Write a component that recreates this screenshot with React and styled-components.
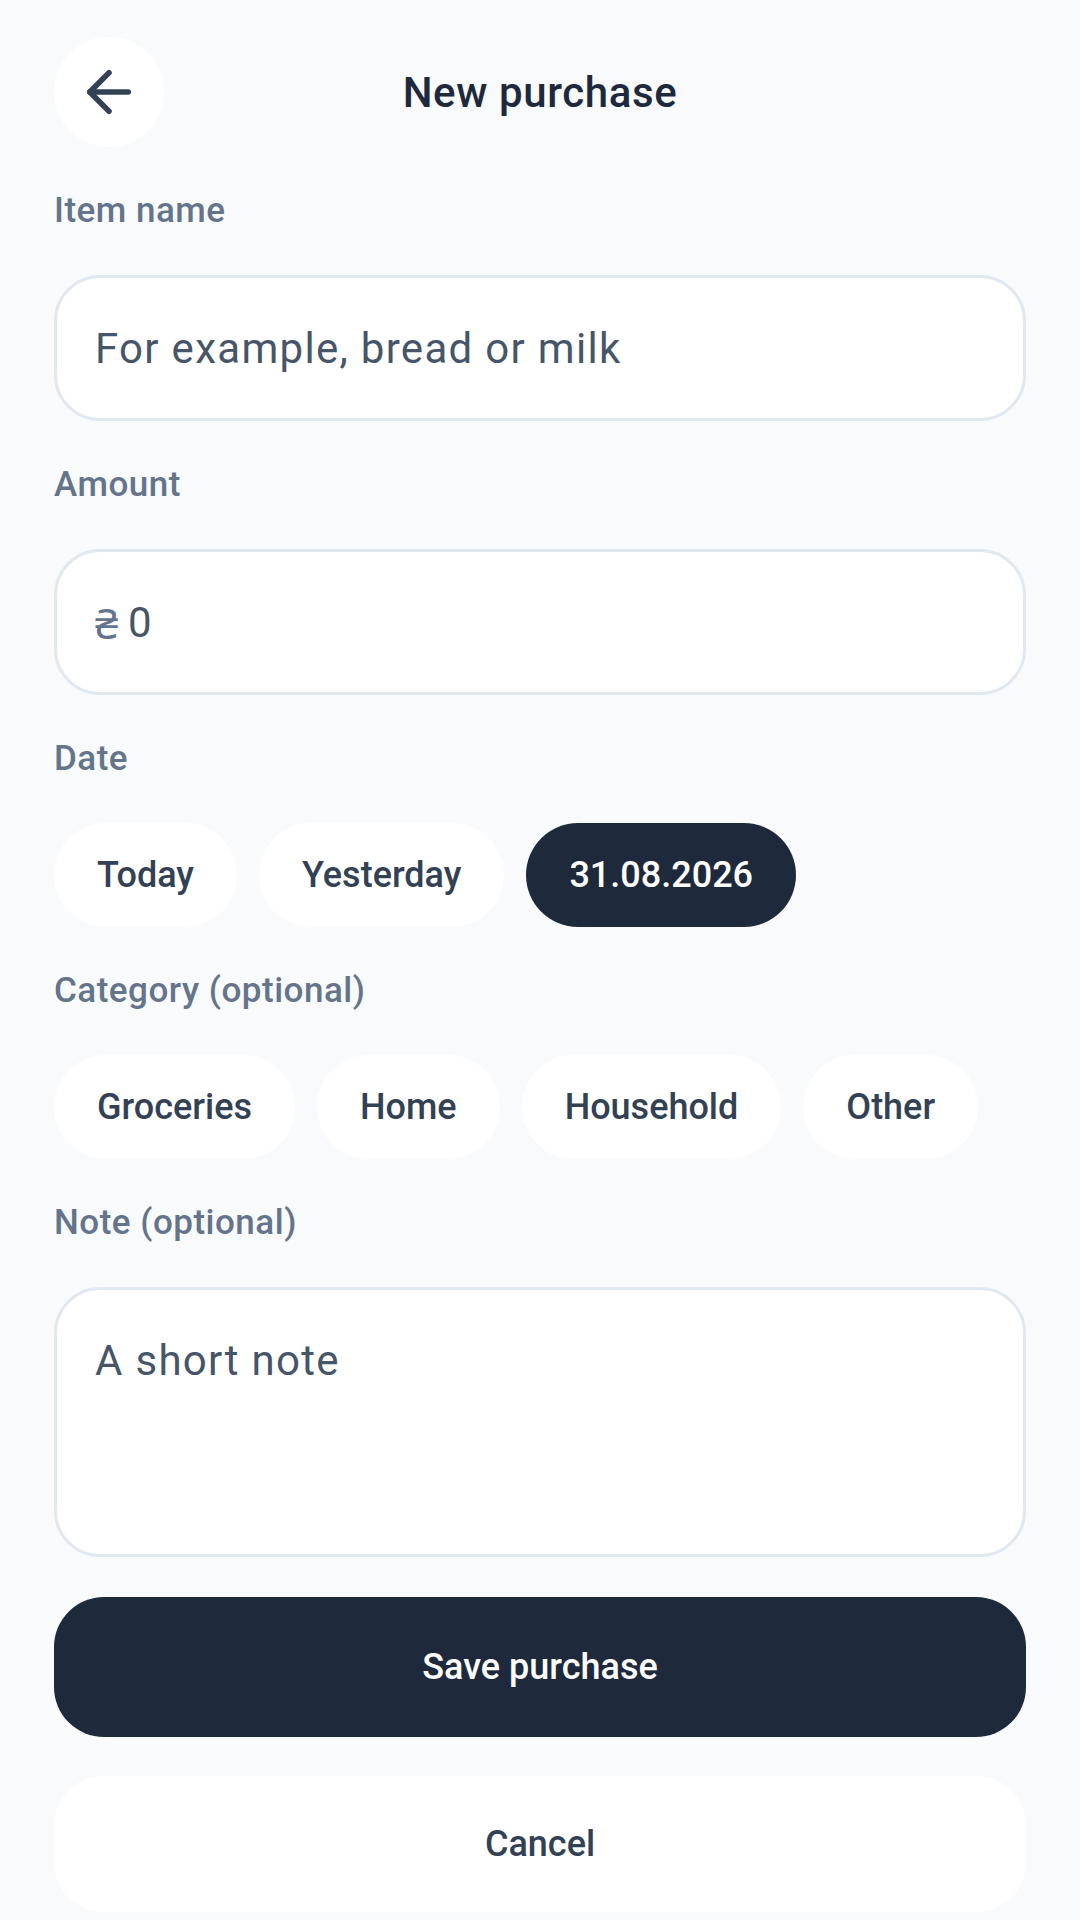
import { useState } from "react";
import styled, { createGlobalStyle } from "styled-components";
import { ArrowLeft } from "lucide-react";

const GlobalStyle = createGlobalStyle`
  * { box-sizing: border-box; }
  html, body {
    margin: 0;
    background: #f8fafc;
    font-family: Roboto, "Noto Sans", "Liberation Sans", sans-serif;
  }
`;

const Page = styled.div`
  min-height: 1920px;
  padding: 37px 54px 0;
  background: #f8fafc;
  color: #1e293b;
`;

const Header = styled.header`
  display: grid;
  grid-template-columns: 110px 1fr 110px;
  align-items: center;
  height: 110px;
`;

const BackButton = styled.button`
  width: 110px;
  height: 110px;
  border: none;
  border-radius: 50%;
  background: #ffffff;
  color: #334155;
  display: flex;
  align-items: center;
  justify-content: center;
  padding: 0;
  cursor: pointer;
`;

const Title = styled.h1`
  margin: 0;
  text-align: center;
  font-size: 42px;
  font-weight: 500;
  letter-spacing: 0.6px;
  color: #1e293b;
`;

const Form = styled.form`
  display: flex;
  flex-direction: column;
  gap: 43px;
  margin-top: 43px;
`;

const Field = styled.div`
  display: flex;
  flex-direction: column;
  gap: 43px;
`;

const Label = styled.label`
  font-size: 35px;
  line-height: 42px;
  font-weight: 500;
  letter-spacing: 0.5px;
  color: #64748b;
`;

const InputBox = styled.div`
  display: flex;
  align-items: center;
  gap: 10px;
  height: 146px;
  padding: 0 38px;
  background: #ffffff;
  border: 3px solid #e2e8f0;
  border-radius: 46px;
  font-size: 42px;
  color: #475569;
`;

const TextInput = styled.input`
  flex: 1;
  border: none;
  outline: none;
  background: transparent;
  font: inherit;
  color: #1e293b;
  letter-spacing: 1.3px;
  padding: 0;
  &::placeholder {
    color: #475569;
  }
`;

const Currency = styled.span`
  color: #64748b;
`;

const NoteArea = styled.textarea`
  height: 270px;
  padding: 39px 38px;
  background: #ffffff;
  border: 3px solid #e2e8f0;
  border-radius: 46px;
  font: inherit;
  font-size: 42px;
  line-height: 63px;
  letter-spacing: 1.3px;
  color: #1e293b;
  resize: none;
  outline: none;
  &::placeholder {
    color: #475569;
  }
`;

const ChipRow = styled.div`
  display: flex;
  gap: 22px;
`;

const Chip = styled.button`
  height: 104px;
  padding: 0 43px;
  border: none;
  border-radius: 52px;
  font-family: inherit;
  font-size: 36px;
  font-weight: 500;
  background: ${(p) => (p.$active ? "#1e293b" : "#ffffff")};
  color: ${(p) => (p.$active ? "#ffffff" : "#334155")};
  cursor: pointer;
`;

const Actions = styled.div`
  display: flex;
  flex-direction: column;
  gap: 39px;
  margin-top: -3px;
`;

const Button = styled.button`
  height: ${(p) => (p.$primary ? "140px" : "136px")};
  border: none;
  border-radius: 50px;
  font-family: inherit;
  font-size: 36px;
  font-weight: 500;
  background: ${(p) => (p.$primary ? "#1e293b" : "#ffffff")};
  color: ${(p) => (p.$primary ? "#ffffff" : "#334155")};
  cursor: pointer;
`;

const dates = ["Today", "Yesterday", "31.08.2026"];
const categories = ["Groceries", "Home", "Household", "Other"];

const App = () => {
  const [date, setDate] = useState("31.08.2026");
  const [category, setCategory] = useState(null);

  return (
    <Page>
      <GlobalStyle />
      <Header>
        <BackButton type="button" aria-label="Back">
          <ArrowLeft size={66} strokeWidth={2} />
        </BackButton>
        <Title>New purchase</Title>
        <span />
      </Header>

      <Form onSubmit={(e) => e.preventDefault()}>
        <Field>
          <Label htmlFor="name">Item name</Label>
          <InputBox>
            <TextInput id="name" placeholder="For example, bread or milk" />
          </InputBox>
        </Field>

        <Field>
          <Label htmlFor="amount">Amount</Label>
          <InputBox>
            <Currency>₴</Currency>
            <TextInput id="amount" placeholder="0" inputMode="decimal" />
          </InputBox>
        </Field>

        <Field>
          <Label>Date</Label>
          <ChipRow>
            {dates.map((d) => (
              <Chip key={d} type="button" $active={date === d} onClick={() => setDate(d)}>
                {d}
              </Chip>
            ))}
          </ChipRow>
        </Field>

        <Field>
          <Label>Category (optional)</Label>
          <ChipRow>
            {categories.map((c) => (
              <Chip key={c} type="button" $active={category === c} onClick={() => setCategory(c)}>
                {c}
              </Chip>
            ))}
          </ChipRow>
        </Field>

        <Field>
          <Label htmlFor="note">Note (optional)</Label>
          <NoteArea id="note" placeholder="A short note" />
        </Field>

        <Actions>
          <Button type="submit" $primary>Save purchase</Button>
          <Button type="button">Cancel</Button>
        </Actions>
      </Form>
    </Page>
  );
};

export default App;
